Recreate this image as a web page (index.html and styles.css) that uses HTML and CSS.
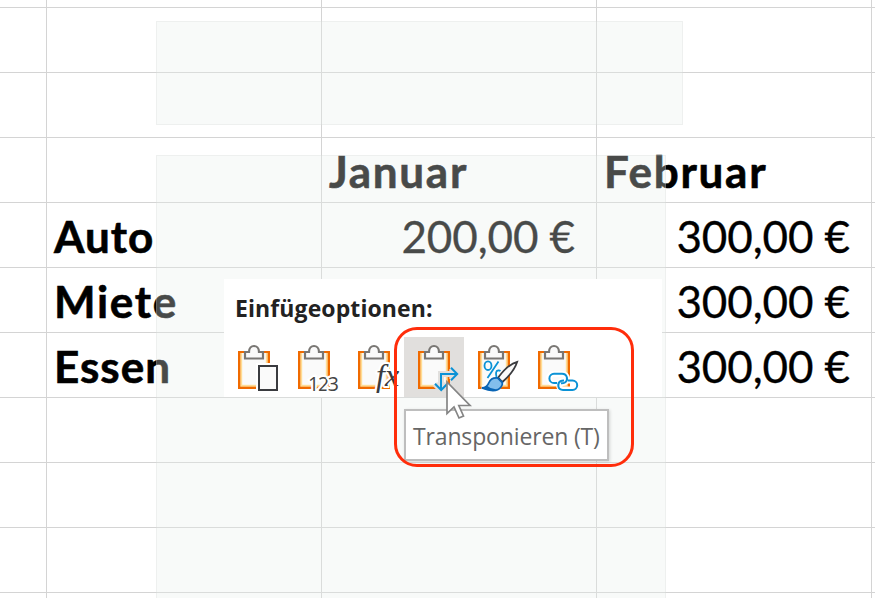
FILE: index.html
```html
<!DOCTYPE html>
<html lang="de">
<head>
    <meta charset="utf-8">
    <title>Einfügeoptionen</title>
    <link rel="stylesheet" href="styles.css">
</head>
<body>
<!-- Tabelle -->
<div class="sheet">
    <div class="cell"></div><div class="cell"></div><div class="cell"></div><div class="cell"></div><div class="cell"></div>
    <div class="cell"></div><div class="cell"></div><div class="cell"></div><div class="cell"></div><div class="cell"></div>
    <div class="cell"></div><div class="cell"></div><div class="cell"></div><div class="cell"></div><div class="cell"></div>

    <div class="cell"></div>
    <div class="cell"></div>
    <div class="cell head month">Januar</div>
    <div class="cell head month">Februar</div>
    <div class="cell"></div>

    <div class="cell"></div>
    <div class="cell head">Auto</div>
    <div class="cell num">200,00 €</div>
    <div class="cell num">300,00 €</div>
    <div class="cell"></div>

    <div class="cell"></div>
    <div class="cell head month">Miete</div>
    <div class="cell"></div>
    <div class="cell num">300,00 €</div>
    <div class="cell"></div>

    <div class="cell"></div>
    <div class="cell head">Essen</div>
    <div class="cell"></div>
    <div class="cell num">300,00 €</div>
    <div class="cell"></div>

    <div class="cell"></div><div class="cell"></div><div class="cell"></div><div class="cell"></div><div class="cell"></div>
    <div class="cell"></div><div class="cell"></div><div class="cell"></div><div class="cell"></div><div class="cell"></div>
    <div class="cell"></div><div class="cell"></div><div class="cell"></div><div class="cell"></div><div class="cell"></div>
    <div class="cell last"></div><div class="cell last"></div><div class="cell last"></div><div class="cell last"></div><div class="cell last"></div>
</div>

<!-- Minisymbolleiste und Kontextmenü, halb ausgeblendet -->
<div class="toolbar"></div>
<div class="menu"></div>

<svg class="defs" width="0" height="0">
    <symbol id="clipboard" viewBox="0 0 60 60">
        <rect x="14" y="14" width="32" height="38" fill="#f06a00"/>
        <path d="M16.300 16h27.400v33.700H16.300z" fill="#ffdc94"/>
        <path d="M18.200 16h23.600v31.800H18.200z" fill="#fafafa"/>
        <path d="M21 15h4C25 7 35 7 35 15h4v6.500H21z" fill="#fafafa" stroke="#797774" stroke-width="2.200"/>
    </symbol>
</svg>

<!-- Einfügeoptionen -->
<div class="paste">
    <div class="title">Einfügeoptionen:</div>
    <div class="options">
        <svg class="option" viewBox="0 0 60 60">
            <use href="#clipboard"/>
            <path d="M32 26h24v30H32z" fill="#fff"/>
            <path d="M35 29h18v24H35z" fill="#fafafa" stroke="#3a3b3f" stroke-width="2"/>
        </svg>
        <svg class="option" viewBox="0 0 60 60">
            <use href="#clipboard"/>
            <text class="digits" x="24" y="53.500" textLength="31">123</text>
        </svg>
        <svg class="option" viewBox="0 0 60 60">
            <use href="#clipboard"/>
            <text class="fx" x="32" y="48.500">fx</text>
        </svg>
        <svg class="option active" viewBox="0 0 60 60">
            <use href="#clipboard"/>
            <g fill="none" stroke="#e1dfdd" stroke-width="6">
                <path d="M37 52V37h16M47 31l6 6-6 6M31 47l6 6 6-6"/>
            </g>
            <path d="M37 52.500V37h16M47 30.700l6.200 6.300-6.200 6.300M31 46.800l6.200 6.200 6.200-6.200" fill="none" stroke="#0a92d6" stroke-width="2"/>
        </svg>
        <svg class="option" viewBox="0 0 60 60">
            <use href="#clipboard"/>
            <path d="M53 25L36 42M34 42q-8-1-10 5-2 4-6 4 13 5 18-4z" fill="none" stroke="#fff" stroke-width="6"/>
            <g fill="none" stroke="#0a92d6" stroke-width="1.800">
                <ellipse cx="24" cy="28.700" rx="3.500" ry="4.300"/>
                <path d="M34.500 24.500L23.500 41M32.500 40q-1.500-6 1.500-6.500 1.500-.3 2.500.5"/>
            </g>
            <path d="M53.200 24.800q-9 2.200-19 15.700l4.200 4.500Q50 35 53.200 24.800z" fill="#fafafa" stroke="#3a3b3f" stroke-width="1.800"/>
            <path d="M38.300 45.500L33.800 41q-6.500-.8-8.800 4.500-2 5-7 5.500 14 5.500 19-1 1.800-2 1.300-4.500z" fill="#83beec" stroke="#0a65b5" stroke-width="1.800"/>
            <path d="M17 51q4 0 6.500-2 4 4 10 2.700-6 3.500-16.500-.7z" fill="#0a65b5"/>
        </svg>
        <svg class="option" viewBox="0 0 60 60">
            <use href="#clipboard"/>
            <g fill="none" stroke="#fff" stroke-width="6">
                <rect x="25" y="37" width="18" height="9" rx="4.500"/>
                <rect x="35" y="43.500" width="18" height="9" rx="4.500"/>
            </g>
            <g fill="none" stroke="#0a92d6" stroke-width="2">
                <path d="M33 46h-3a4.600 4.600 0 0 1 0-9.200H38c5.500 0 6.500 6.500 3 8.700q-1.500.9-4 .8"/>
                <path d="M44 43.500h4.500a4.700 4.700 0 0 1 0 9.400H39c-5.500 0-6-6.500-2.500-8.700 1-.6 2-.7 3.500-.7"/>
            </g>
        </svg>
    </div>
</div>

<div class="tooltip">Transponieren (T)</div>
<div class="marker"></div>
<svg class="cursor" width="28" height="40" viewBox="0 0 28 40">
    <path d="M2 2v31.500l7-6.500 5 11 4.500-2-4.700-10.500H25z" fill="#fff" stroke="#858585" stroke-width="1.700"/>
</svg>
</body>
</html>
```
FILE: styles.css
```css
body {
    margin: 0;
    width: 875px;
    height: 598px;
    position: relative;
    overflow: hidden;
    background: #fff;
}

/* Tabelle */
.sheet {
    display: grid;
    grid-template-columns: 47px 275px 275px 275px 3px;
    grid-template-rows: 8px repeat(9, 65px) 5px;
    font-family: Lato, sans-serif;
    font-size: 44px;
    color: #000;
}
.cell {
    display: flex;
    align-items: center;
    box-sizing: border-box;
    border-right: 1px solid #d4d4d4;
    border-bottom: 1px solid #d4d4d4;
    white-space: nowrap;
    line-height: 62px;
}
.cell:nth-child(5n) {
    border-right: 0;
}
.last {
    border-bottom: 0;
}
.head {
    padding-left: 7px;
    padding-top: 2px;
    font-weight: bold;
    letter-spacing: 1px;
    -webkit-text-stroke: .6px #000;
}
.month {
    letter-spacing: 1.700px;
}
.num {
    justify-content: flex-end;
    padding-right: 21px;
    padding-top: 1px;
    letter-spacing: -.1px;
    -webkit-text-stroke: .3px #000;
}

/* ausgeblendete Flächen */
.toolbar,
.menu {
    position: absolute;
    left: 156px;
    box-sizing: border-box;
    background: rgba(232, 238, 235, .31);
    border: 1px solid rgba(200, 200, 200, .2);
}
.toolbar {
    top: 21px;
    width: 527px;
    height: 104px;
}
.menu {
    top: 155px;
    width: 510px;
    height: 443px;
    border-bottom: 0;
}

/* Einfügeoptionen */
.defs {
    position: absolute;
}
.paste {
    position: absolute;
    left: 224px;
    top: 279px;
    width: 438px;
    height: 118px;
    background: #fff;
}
.title {
    height: 58px;
    padding-left: 11px;
    font: bold 23px/58px "Open Sans", sans-serif;
    letter-spacing: .1px;
    color: #222;
}
.options {
    display: flex;
}
.option {
    width: 60px;
    height: 60px;
}
.active {
    background: #e1dfdd;
}
.digits {
    font: 19.500px "Open Sans", sans-serif;
    fill: #444;
    stroke: #fff;
    stroke-width: 4px;
    paint-order: stroke;
}
.fx {
    font: italic 32px "Liberation Serif", serif;
    fill: #3a3b3f;
    stroke: #fff;
    stroke-width: 4px;
    paint-order: stroke;
}

.tooltip {
    position: absolute;
    left: 404px;
    top: 409px;
    width: 205px;
    height: 52px;
    box-sizing: border-box;
    padding-left: 7px;
    border: 2px solid #bebebe;
    background: #fff;
    box-shadow: 1px 1px 3px rgba(0, 0, 0, .15);
    font: 23px/51px "Open Sans", sans-serif;
    letter-spacing: -.15px;
    color: #666;
    white-space: nowrap;
}
.marker {
    position: absolute;
    left: 394px;
    top: 327px;
    width: 240px;
    height: 140px;
    box-sizing: border-box;
    border: 3px solid #ff2d0b;
    border-radius: 23px;
}
.cursor {
    position: absolute;
    left: 445px;
    top: 380px;
}
```
